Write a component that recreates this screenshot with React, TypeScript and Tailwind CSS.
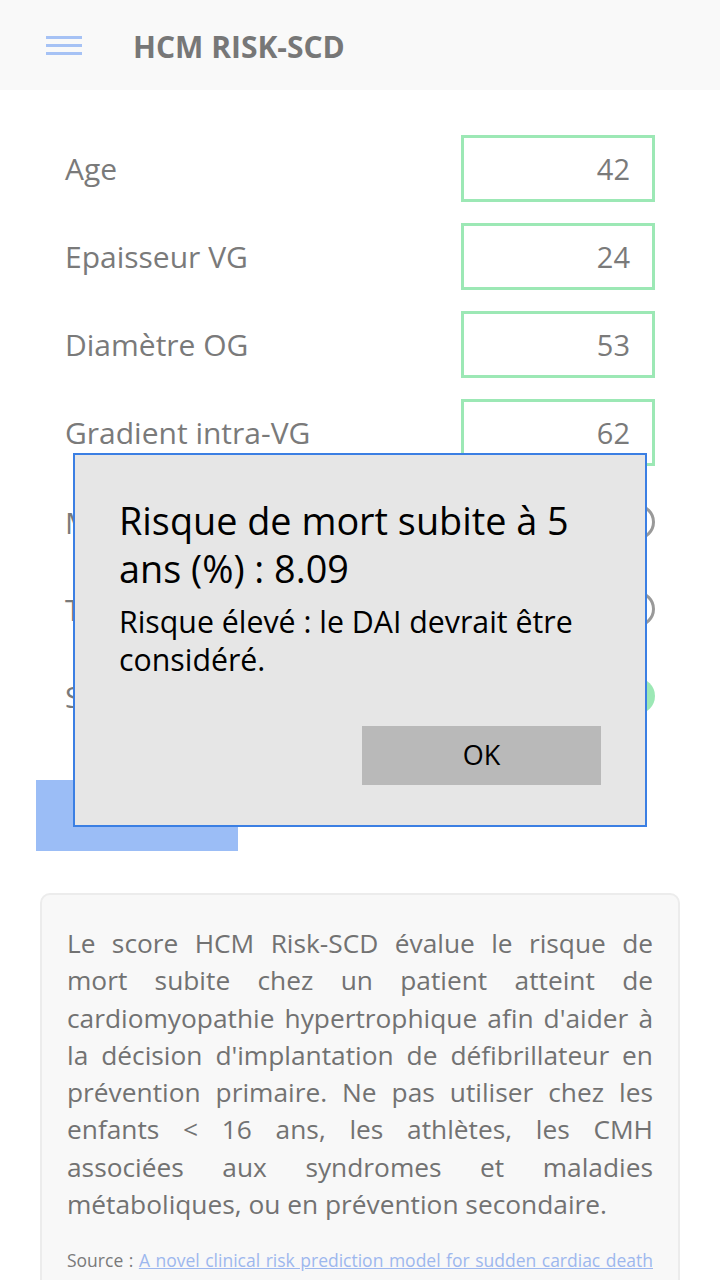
import { useState } from "react"

const font = { fontFamily: '"Open Sans", "Noto Sans", sans-serif' }

function NumberRow({ label, value }: { label: string; value: string }) {
  return (
    <div className="flex h-[67px] items-center justify-between">
      <span className="text-[30px] text-[#7a7a7a]">{label}</span>
      <div className="flex h-[67px] w-[194px] items-center justify-end border-[3px] border-[#9ce8b5] bg-white pr-[22px] text-[29px] text-[#7a7a7a]">
        {value}
      </div>
    </div>
  )
}

function ToggleRow({ label, on, first }: { label: string; on: boolean; first?: boolean }) {
  return (
    <div className={`${first ? "mt-[23px]" : "mt-[21px]"} flex h-[66px] items-center justify-between`}>
      <span className="text-[30px] text-[#7a7a7a]">{label}</span>
      {on ? (
        <div className="flex h-[36px] w-[80px] items-center justify-end rounded-full bg-[#9ce8b5] pr-[9px]">
          <div className="h-[18px] w-[18px] rounded-full bg-white" />
        </div>
      ) : (
        <div className="flex h-[36px] w-[80px] items-center rounded-full border-[3px] border-[#999999] pl-[7px]">
          <div className="h-[18px] w-[18px] rounded-full bg-[#999999]" />
        </div>
      )}
    </div>
  )
}

export default function App() {
  const [open, setOpen] = useState(true)

  return (
    <div className="relative min-h-[1280px] overflow-hidden bg-white" style={font}>
      {/* Header */}
      <div className="flex h-[90px] items-center bg-[#f9f9f9]">
        <div className="ml-[46px] flex w-[36px] flex-col gap-[5px]">
          <div className="h-[3px] bg-[#a6c2f5]" />
          <div className="h-[3px] bg-[#a6c2f5]" />
          <div className="h-[3px] bg-[#a6c2f5]" />
        </div>
        <h1 className="ml-[51px] mt-[2px] text-[30px] font-bold text-[#777777]">HCM RISK-SCD</h1>
      </div>

      {/* Form */}
      <div className="px-[65px] pt-[45px]">
        <div className="flex flex-col gap-[21px]">
          <NumberRow label="Age" value="42" />
          <NumberRow label="Epaisseur VG" value="24" />
          <NumberRow label="Diamètre OG" value="53" />
          <NumberRow label="Gradient intra-VG" value="62" />
        </div>
        <ToggleRow label="Mort subite familiale" on={false} first />
        <ToggleRow label="TV non soutenue" on={false} />
        <ToggleRow label="Syncope inexpliquée" on={true} />
      </div>

      <button className="ml-[36px] mt-[51px] flex h-[71px] w-[202px] items-center justify-center bg-[#9bbdf6] text-[28px] text-white">
        Calculer
      </button>

      {/* Info card */}
      <div className="mx-[40px] mt-[42px] rounded-[10px] border-2 border-[#ececec] bg-[#f8f8f8] px-[25px] pb-[30px] pt-[30px]">
        <p className="text-justify text-[26.3px] leading-[37.3px] text-[#727272]">
          Le score HCM Risk-SCD évalue le risque de mort subite chez un patient atteint de
          cardiomyopathie hypertrophique afin d'aider à la décision d'implantation de
          défibrillateur en prévention primaire. Ne pas utiliser chez les enfants &lt; 16 ans,
          les athlètes, les CMH associées aux syndromes et maladies métaboliques, ou en
          prévention secondaire.
        </p>
        <p className="mt-[22px] text-justify text-[17.5px] leading-[30px] text-[#7a7a7a]">
          Source :{" "}
          <a className="text-[#9db7ee] underline" href="#">
            A novel clinical risk prediction model for sudden cardiac death in hypertrophic
            cardiomyopathy (HCM Risk-SCD)
          </a>
        </p>
      </div>

      {/* Result dialog */}
      {open && (
        <div className="absolute left-[73px] top-[453px] w-[574px] border-2 border-[#3b7fe3] bg-[#e6e6e6] px-[44px] pb-[40px] pt-[42px]">
          <h2 className="text-[37.8px] leading-[48px] text-black">
            Risque de mort subite à 5 ans (%) : 8.09
          </h2>
          <p className="mt-[10px] text-[30.3px] leading-[38px] text-black">
            Risque élevé : le DAI devrait être considéré.
          </p>
          <div className="mt-[47px] flex justify-end">
            <button
              onClick={() => setOpen(false)}
              className="h-[59px] w-[239px] bg-[#b9b9b9] text-[27px] text-black"
            >
              OK
            </button>
          </div>
        </div>
      )}
    </div>
  )
}
